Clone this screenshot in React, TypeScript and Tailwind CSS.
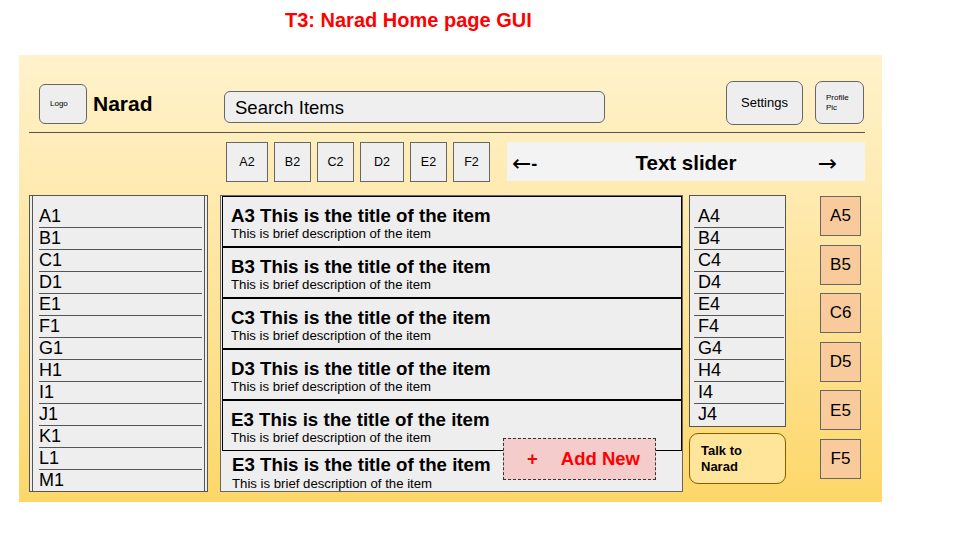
import React from 'react';

const NaradHome = () => {
  const tabs = [
    { label: "A2", w: "w-[42px]" },
    { label: "B2", w: "w-[37px]" },
    { label: "C2", w: "w-[37px]" },
    { label: "D2", w: "w-[44px]" },
    { label: "E2", w: "w-[37px]" },
    { label: "F2", w: "w-[37px]" }
  ];

  const leftItems = ["A1", "B1", "C1", "D1", "E1", "F1", "G1", "H1", "I1", "J1", "K1", "L1", "M1"];
  const rightItems = ["A4", "B4", "C4", "D4", "E4", "F4", "G4", "H4", "I4", "J4"];
  const cards = ["A3", "B3", "C3", "D3", "E3"];
  const quick = ["A5", "B5", "C6", "D5", "E5", "F5"];

  return (
    <div className="w-[960px] h-[540px] bg-white overflow-hidden font-['Liberation_Sans',Arial,sans-serif] text-black">
      {/* Slide title */}
      <div className="pt-[10px] pl-[285px] text-[20px] leading-none font-bold text-[#ff0000]">
        T3: Narad Home page GUI
      </div>

      {/* Mockup panel */}
      <div className="mt-[25px] ml-[19px] w-[863px] h-[447px] bg-gradient-to-b from-[#fff2cc] to-[#fdd768]">
        {/* Header */}
        <div className="flex items-start h-[77px]">
          <div className="ml-[20px] mt-[29px] w-[48px] h-[40px] rounded-[6px] border border-[#666] bg-[#eeeeee] flex items-center pl-[10px] text-[8px]">
            Logo
          </div>
          <div className="ml-[6px] mt-[38px] w-[131px] text-[21px] leading-none font-bold">Narad</div>
          <div className="mt-[36px] w-[381px] h-[32px] rounded-[6px] border border-[#666] bg-[#efefef] flex items-center pl-[10px] pt-[1px] text-[18.5px]">
            Search Items
          </div>
          <div className="ml-[121px] mt-[26px] w-[77px] h-[44px] rounded-[7px] border border-[#666] bg-[#eeeeee] flex items-center justify-center text-[13px]">
            Settings
          </div>
          <div className="ml-[12px] mt-[26px] w-[49px] h-[43px] rounded-[7px] border border-[#666] bg-[#eeeeee] flex flex-col justify-center pl-[10px] text-[8px] leading-[10px]">
            <span>Profile</span>
            <span>Pic</span>
          </div>
        </div>
        <div className="ml-[10px] w-[836px] h-px bg-[#555]" />

        {/* Tabs + slider */}
        <div className="mt-[9px] ml-[207px] flex items-start">
          <div className="flex gap-[6px]">
            {tabs.map((tab) => (
              <div
                key={tab.label}
                className={`${tab.w} h-[40px] border border-[#666] bg-[#efefef] flex items-center justify-center text-[12.5px]`}
              >
                {tab.label}
              </div>
            ))}
          </div>
          <div className="ml-[17px] w-[358px] h-[39px] pt-[4px] bg-[#f3f3f3] grid grid-cols-[1fr_auto_1fr] items-center">
            <div className="pl-[5px] flex items-center leading-none">
              <span className="font-['DejaVu_Sans',sans-serif] text-[23px]">←</span>
              <span className="text-[18px] font-bold">-</span>
            </div>
            <div className="text-[20.5px] leading-none font-bold">Text slider</div>
            <div className="pr-[28px] text-right font-['DejaVu_Sans',sans-serif] text-[23px] leading-none">→</div>
          </div>
        </div>

        {/* Main content */}
        <div className="mt-[13px] flex items-start">
          {/* Left list */}
          <div className="ml-[10px] w-[179px] h-[297px] border border-[#555] bg-[#eeeeee] px-[2px]">
            <div className="h-full border-x border-[#555] pt-[10px] overflow-hidden">
              {leftItems.map((item, index) => (
                <div
                  key={item}
                  className={`h-[22px] ml-[6px] mr-[2px] text-[18px] leading-[21px] ${index < leftItems.length - 1 ? "border-b border-[#555]" : ""}`}
                >
                  {item}
                </div>
              ))}
            </div>
          </div>

          {/* Item feed */}
          <div className="relative ml-[12px] w-[463px] h-[297px] border border-[#666] bg-[#eeeeee] pl-[1px] overflow-hidden">
            {cards.map((card) => (
              <div key={card} className="h-[51px] border border-black pl-[8px] pt-[9px]">
                <div className="text-[18.7px] leading-[20px] font-bold">{card} This is the title of the item</div>
                <div className="mt-[1px] text-[13.2px] leading-[14px]">This is brief description of the item</div>
              </div>
            ))}
            <div className="pl-[10px] pt-[4px]">
              <div className="text-[18.7px] leading-[20px] font-bold">E3 This is the title of the item</div>
              <div className="mt-[2px] text-[13.2px] leading-[14px]">This is brief description of the item</div>
            </div>

            <div className="absolute left-[282px] top-[242px] w-[153px] h-[42px] border border-dashed border-[#333] bg-[#f4cccc] flex items-center pl-[23px] text-[18.5px] font-bold text-[#ff0000]">
              <span>+</span>
              <span className="ml-[23px]">Add New</span>
            </div>
          </div>

          {/* Right list + assistant */}
          <div className="ml-[6px] w-[97px] flex flex-col">
            <div className="h-[232px] border border-[#555] bg-[#eeeeee] pt-[10px] overflow-hidden">
              {rightItems.map((item, index) => (
                <div
                  key={item}
                  className={`h-[22px] ml-[4px] mr-[1px] pl-[4px] text-[18px] leading-[21px] ${index < rightItems.length - 1 ? "border-b border-[#555]" : ""}`}
                >
                  {item}
                </div>
              ))}
            </div>
            <div className="mt-[6px] h-[51px] rounded-[9px] border border-[#7f6000] bg-[#ffe599] pl-[11px] pt-[9px] text-[13px] leading-[16px] font-bold">
              Talk to
              <br />
              Narad
            </div>
          </div>

          {/* Quick buttons */}
          <div className="ml-[34px] mt-[1px] flex flex-col gap-[8.6px]">
            {quick.map((q) => (
              <div
                key={q}
                className="w-[41px] h-[40px] border border-[#666] bg-[#f9cb9c] flex items-center justify-center text-[17px]"
              >
                {q}
              </div>
            ))}
          </div>
        </div>
      </div>
    </div>
  );
};

export default NaradHome;
